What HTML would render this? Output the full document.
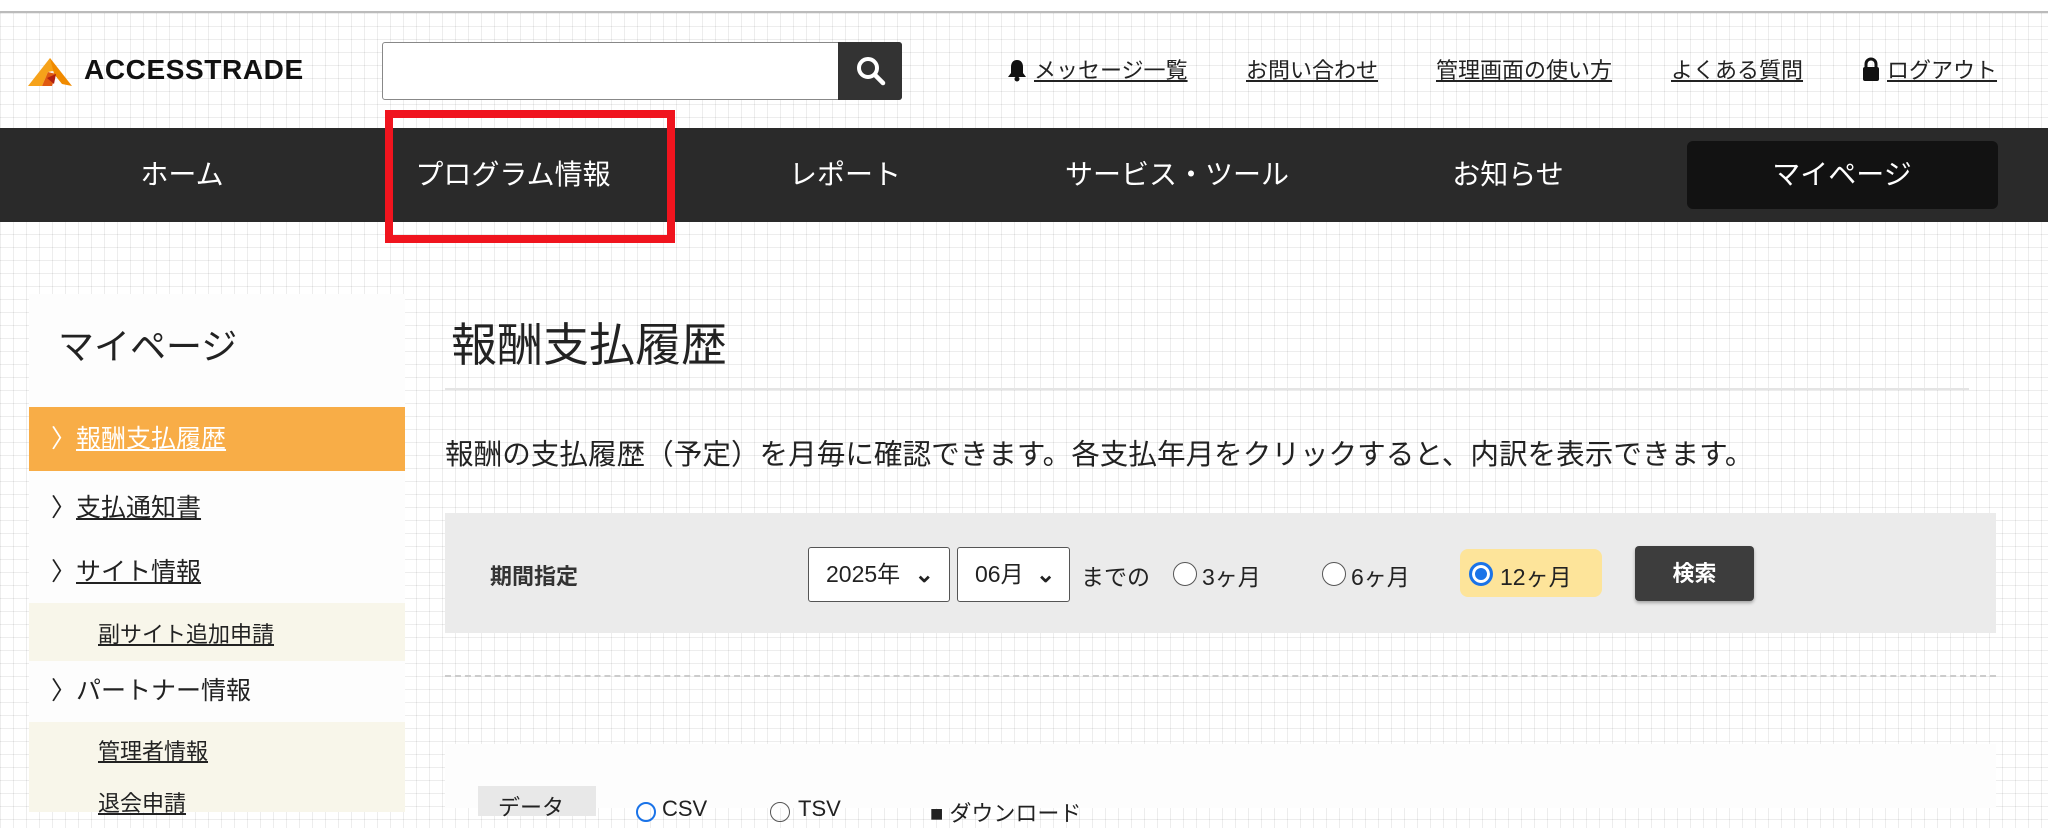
<!DOCTYPE html>
<html><head><meta charset="utf-8"><style>
*{margin:0;padding:0;box-sizing:border-box}
body{width:2048px;height:808px;overflow:hidden;position:relative;font-family:"Liberation Sans","Noto Sans CJK JP",sans-serif;color:#222;
background-color:#fff;
background-image:linear-gradient(90deg,rgba(0,0,0,.07) 1px,transparent 1px),linear-gradient(rgba(0,0,0,.07) 1px,transparent 1px);
background-size:13px 13px}
.a{position:absolute;white-space:nowrap}
.topline{left:0;top:0;width:2048px;height:13px;background:#fff;border-bottom:2px solid #bbb}
.nav{left:0;top:128px;width:2048px;height:94px;background:#2a2a2a}
.nav span{position:absolute;top:0;line-height:94px;color:#fff;font-size:28px;transform:translateX(-50%)}
.links a{position:absolute;top:53px;font-size:22px;color:#222;text-decoration:underline}
.side{left:29px;top:294px;width:376px;height:514px;background:#fdfdfd}
.si{position:absolute;left:0;width:376px;font-size:25px}
.si u{text-decoration:underline}
.sub{position:absolute;left:0;width:376px;background:#f8f6ea}
.sub a{position:absolute;left:69px;font-size:22px;color:#222;text-decoration:underline}
</style></head><body>
<div class="a topline"></div>
<svg class="a" style="left:28px;top:56px" width="44" height="32" viewBox="0 0 44 32"><polygon points="0,30 22,2 30,14 20,16 14,30" fill="#f6a21a"/><polygon points="22,2 44,30 34,28 26,18" fill="#f08a00"/><polygon points="14,30 20,16 28,18 24,30" fill="#e05a10"/><polygon points="19,22 28,18 26,28" fill="#b02010"/></svg>
<div class="a" style="left:84px;top:54px;font-size:28px;font-weight:bold;letter-spacing:.6px;color:#111">ACCESSTRADE</div>
<div class="a" style="left:382px;top:42px;width:520px;height:58px;border:1px solid #888;border-radius:3px;background:#fff"></div>
<div class="a" style="left:838px;top:42px;width:64px;height:58px;background:#333;border-radius:0 3px 3px 0"></div>
<svg class="a" style="left:855px;top:55px" width="32" height="32" viewBox="0 0 32 32"><circle cx="13" cy="13" r="9" fill="none" stroke="#fff" stroke-width="4"/><line x1="20" y1="20" x2="28" y2="28" stroke="#fff" stroke-width="4.5" stroke-linecap="round"/></svg>
<div class="links">
<svg class="a" style="left:1006px;top:58px" width="22" height="24" viewBox="0 0 22 24"><path d="M11 2c-4 0-6 3-6 7v6l-3 4h18l-3-4V9c0-4-2-7-6-7z" fill="#111"/><circle cx="11" cy="21" r="2.5" fill="#111"/></svg>
<a style="left:1034px">メッセージ一覧</a>
<a style="left:1246px">お問い合わせ</a>
<a style="left:1436px">管理画面の使い方</a>
<a style="left:1671px">よくある質問</a>
<svg class="a" style="left:1862px;top:56px" width="18" height="26" viewBox="0 0 18 26"><path d="M4 12V8a5 5 0 0 1 10 0v4" fill="none" stroke="#111" stroke-width="3"/><rect x="1" y="11" width="16" height="14" rx="2" fill="#111"/></svg>
<a style="left:1887px">ログアウト</a>
</div>
<div class="a nav">
<span style="left:182px">ホーム</span>
<span style="left:513px">プログラム情報</span>
<span style="left:845px">レポート</span>
<span style="left:1177px">サービス・ツール</span>
<span style="left:1508px">お知らせ</span>
<div style="position:absolute;left:1687px;top:13px;width:311px;height:68px;background:#121212;border-radius:6px"></div>
<span style="left:1842px">マイページ</span>
</div>
<div class="a" style="left:385px;top:110px;width:290px;height:133px;border:8px solid #f0141e"></div>
<div class="a side">
<div class="si" style="top:24px;left:29px;font-size:36px;color:#222">マイページ</div>
<div class="si" style="top:113px;height:64px;background:#f8ad47;color:#fff;line-height:64px;padding-left:22px">〉<u>報酬支払履歴</u></div>
<div class="si" style="top:194px;padding-left:22px">〉<u>支払通知書</u></div>
<div class="si" style="top:258px;padding-left:22px">〉<u>サイト情報</u></div>
<div class="sub" style="top:309px;height:58px"><a style="top:14px">副サイト追加申請</a></div>
<div class="si" style="top:377px;padding-left:22px">〉パートナー情報</div>
<div class="sub" style="top:428px;height:90px"><a style="top:12px">管理者情報</a><a style="top:64px">退会申請</a></div>
</div>
<div class="a" style="left:451px;top:309px;font-size:46px;color:#222">報酬支払履歴</div>
<div class="a" style="left:445px;top:388px;width:1524px;height:2px;background:#e4e4e4"></div>
<div class="a" style="left:445px;top:432px;font-size:28.6px;color:#222">報酬の支払履歴（予定）を月毎に確認できます。各支払年月をクリックすると、内訳を表示できます。</div>
<div class="a" style="left:445px;top:513px;width:1551px;height:120px;background:#ebebeb"></div>
<div class="a" style="left:490px;top:559px;font-size:22px;font-weight:bold;color:#333">期間指定</div>
<div class="a" style="left:808px;top:547px;width:142px;height:55px;border:1.5px solid #555;border-radius:3px;background:#fff;font-size:23px;line-height:52px;padding-left:17px">2025年 <b style="margin-left:8px">⌄</b></div>
<div class="a" style="left:957px;top:547px;width:113px;height:55px;border:1.5px solid #555;border-radius:3px;background:#fff;font-size:23px;line-height:52px;padding-left:17px">06月 <b style="margin-left:6px">⌄</b></div>
<div class="a" style="left:1081px;top:558px;font-size:23px">までの</div>
<div class="a" style="left:1173px;top:562px;width:24px;height:24px;border:1.5px solid #555;border-radius:50%;background:#fff"></div>
<div class="a" style="left:1202px;top:558px;font-size:23px">3ヶ月</div>
<div class="a" style="left:1322px;top:562px;width:24px;height:24px;border:1.5px solid #555;border-radius:50%;background:#fff"></div>
<div class="a" style="left:1351px;top:558px;font-size:23px">6ヶ月</div>
<div class="a" style="left:1460px;top:549px;width:142px;height:48px;background:#fde49a;border-radius:8px"></div>
<div class="a" style="left:1469px;top:562px;width:24px;height:24px;border:3px solid #1a73e8;border-radius:50%;background:#1a73e8;box-shadow:inset 0 0 0 3px #fff"></div>
<div class="a" style="left:1500px;top:558px;font-size:23px">12ヶ月</div>
<div class="a" style="left:1635px;top:546px;width:119px;height:55px;background:#3d3d3d;border-radius:4px;color:#fff;font-size:22px;font-weight:bold;text-align:center;line-height:55px;box-shadow:0 2px 3px rgba(0,0,0,.3)">検索</div>
<div class="a" style="left:445px;top:675px;width:1551px;border-top:2px dashed #ccc"></div>
<div class="a" style="left:445px;top:744px;width:1551px;height:64px;background:#fdfdfd"></div>
<div class="a" style="left:478px;top:786px;width:118px;height:30px;background:#e8e8e8;font-size:22px;padding-left:20px;padding-top:4px">データ</div>
<div class="a" style="left:636px;top:802px;width:20px;height:20px;border:2px solid #1a73e8;border-radius:50%"></div>
<div class="a" style="left:662px;top:796px;font-size:22px">CSV</div>
<div class="a" style="left:770px;top:802px;width:20px;height:20px;border:1.5px solid #555;border-radius:50%"></div>
<div class="a" style="left:798px;top:796px;font-size:22px">TSV</div>
<div class="a" style="left:930px;top:796px;font-size:22px">■ ダウンロード</div>
</body></html>
